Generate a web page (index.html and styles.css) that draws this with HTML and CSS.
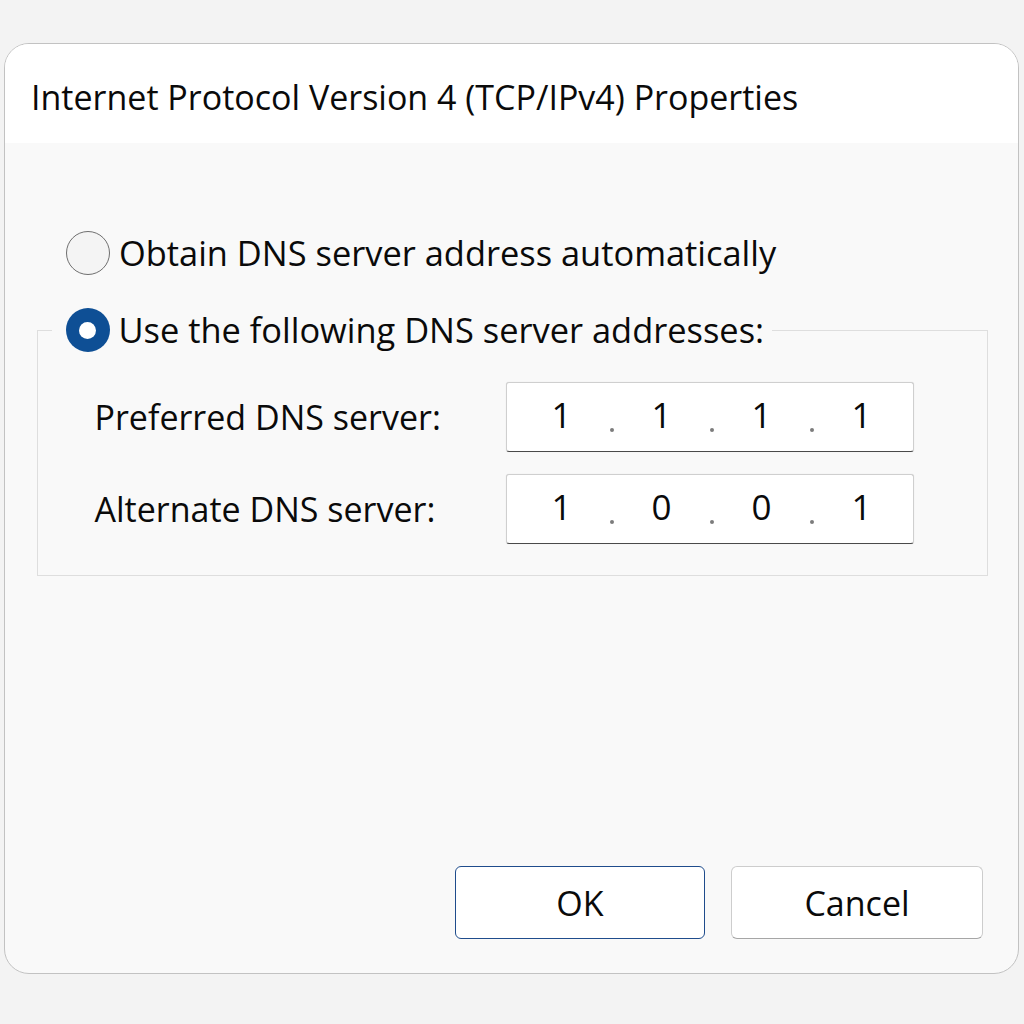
FILE: index.html
```html
<!DOCTYPE html>
<html lang="en">
<head>
<meta charset="utf-8">
<title>Internet Protocol Version 4 (TCP/IPv4) Properties</title>
<link rel="stylesheet" href="styles.css">
</head>
<body>
<div class="dialog">
  <div class="titlebar">Internet Protocol Version 4 (TCP/IPv4) Properties</div>
  <div class="content">
    <label class="option option-auto"><span class="radio"></span><span class="option-text">Obtain DNS server address automatically</span></label>
    <fieldset class="group">
      <legend class="option option-legend"><span class="radio radio-checked"></span><span class="option-text">Use the following DNS server addresses:</span></legend>
      <div class="fields">
        <div class="field">
          <span class="field-label">Preferred DNS server:</span>
          <div class="ipbox">
            <span class="octet">1</span><span class="dot"></span>
            <span class="octet">1</span><span class="dot"></span>
            <span class="octet">1</span><span class="dot"></span>
            <span class="octet">1</span>
          </div>
        </div>
        <div class="field">
          <span class="field-label">Alternate DNS server:</span>
          <div class="ipbox ipbox-plain">
            <span class="octet">1</span><span class="dot"></span>
            <span class="octet">0</span><span class="dot"></span>
            <span class="octet">0</span><span class="dot"></span>
            <span class="octet">1</span>
          </div>
        </div>
      </div>
    </fieldset>
    <div class="actions">
      <button class="btn btn-primary">OK</button>
      <button class="btn">Cancel</button>
    </div>
  </div>
</div>
</body>
</html>
```
FILE: styles.css
```css
* { box-sizing: border-box; }

html, body {
  margin: 0;
  padding: 0;
  background: #f3f3f3;
}

body {
  font-family: "Open Sans", "Noto Sans", "DejaVu Sans", sans-serif;
  color: #111;
  padding: 43px 5px 0 4px;
}

.dialog {
  width: 1015px;
  height: 931px;
  border: 1.5px solid #c2c2c2;
  border-radius: 25px;
  background: #f9f9f9;
  overflow: hidden;
  display: flex;
  flex-direction: column;
}

.titlebar {
  background: #ffffff;
  font-size: 34px;
  line-height: 46px;
  padding: 30px 23px 23px 26px;
  color: #0a0a0a;
  white-space: nowrap;
}

.content {
  flex: 1;
  display: flex;
  flex-direction: column;
  padding: 87px 30px 34px 31.5px;
}

.option {
  display: flex;
  align-items: center;
  gap: 9px;
  font-size: 34.4px;
  line-height: 46px;
  color: #0a0a0a;
}

.option-auto {
  padding-left: 29.5px;
}

.radio {
  flex: none;
  width: 44px;
  height: 44px;
  border-radius: 50%;
  border: 1.5px solid #6f6f6f;
  background: #f4f4f4;
  display: flex;
  align-items: center;
  justify-content: center;
}

.radio-checked {
  border: none;
  background: #0e4f95;
}

.radio-checked::after {
  content: "";
  width: 17px;
  height: 17px;
  border-radius: 50%;
  background: #ffffff;
}

.group {
  margin: 31px 0 0 0;
  padding: 29px 0 31px 14px;
  border: 1px solid #dedede;
  min-inline-size: 0;
}

.option-legend {
  padding: 0 8px 0 14px;
}

.fields {
  display: flex;
  flex-direction: column;
  gap: 22px;
  padding-left: 43px;
}

.field {
  display: flex;
  align-items: center;
}

.field-label {
  width: 411px;
  font-size: 34px;
  line-height: 46px;
  color: #0a0a0a;
}

.ipbox {
  width: 408px;
  height: 70px;
  display: flex;
  align-items: center;
  padding-left: 7px;
  background: #ffffff;
  border: 1px solid #cfcfcf;
  border-bottom: 1.5px solid #4a4a4a;
  border-radius: 3px;
  box-shadow: 0 0 1px rgba(0,0,0,0.15);
}

.octet {
  width: 96px;
  text-align: center;
  font-size: 35px;
  line-height: 46px;
  color: #0a0a0a;
  margin-top: -4px;
}

.dot {
  width: 4px;
  height: 4px;
  border-radius: 50%;
  background: #7c7c7c;
  align-self: flex-end;
  margin-bottom: 19px;
}

.actions {
  margin-top: auto;
  display: flex;
  justify-content: flex-end;
  gap: 26px;
  padding-right: 5px;
}

.btn {
  width: 252px;
  height: 73px;
  font-family: "Open Sans", "Noto Sans", "DejaVu Sans", sans-serif;
  font-size: 34px;
  color: #0a0a0a;
  background: #ffffff;
  border: 1px solid #cdcdcd;
  border-bottom-color: #a6a6a6;
  border-radius: 6px;
  padding: 0;
}

.btn-primary {
  width: 250px;
  border: 1.5px solid #1f4c8c;
}
```
